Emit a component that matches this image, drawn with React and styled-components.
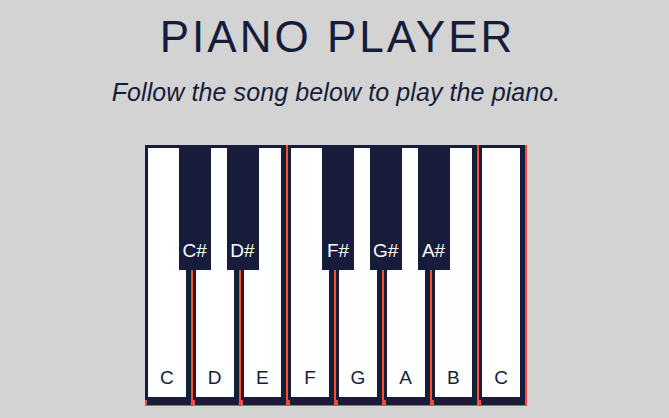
import React from "react";
import styled, { createGlobalStyle } from "styled-components";

const DARK = "#161c3a";
const RED = "#ff4a3b";

const Global = createGlobalStyle`
  html, body { margin: 0; padding: 0; background: #d3d3d3; }
  body { font-family: "Liberation Sans", Arial, sans-serif; }
`;

const Page = styled.main`
  display: flex;
  flex-direction: column;
  align-items: center;
  padding: 15px 0 0 3px;
  min-height: 418px;
  box-sizing: border-box;
`;

const Title = styled.h1`
  margin: 0 0 0 3px;
  font-size: 44px;
  line-height: 44px;
  font-weight: 400;
  letter-spacing: 3px;
  color: ${DARK};
`;

const Subtitle = styled.p`
  margin: 21px 0 0;
  font-size: 25px;
  line-height: 25px;
  letter-spacing: 0.1px;
  font-style: italic;
  color: ${DARK};
`;

const Piano = styled.div`
  position: relative;
  margin-top: 40px;
  width: 382px;
  height: 261px;
  display: flex;
`;

const WhiteKey = styled.div`
  position: relative;
  flex: 1;
  display: flex;
  background: ${DARK};
  padding: 3px 7px 9px 3px;
  box-shadow: inset -2px -1px 0 ${RED};
  &::after {
    content: "";
    position: absolute;
    left: 0;
    bottom: 0;
    width: 2px;
    height: 6px;
    background: ${RED};
  }
`;

const Face = styled.div`
  flex: 1;
  background: #fff;
  display: flex;
  align-items: flex-end;
  justify-content: center;
  padding-bottom: 10px;
`;

const Label = styled.span`
  font-size: 19px;
  line-height: 19px;
  color: ${(p) => (p.$light ? "#fff" : DARK)};
`;

const BlackKey = styled.div`
  position: absolute;
  top: 0;
  width: 32px;
  height: 125px;
  background: ${DARK};
  display: flex;
  align-items: flex-end;
  justify-content: center;
  padding-bottom: 10px;
  box-sizing: border-box;
`;

const whites = ["C", "D", "E", "F", "G", "A", "B", "C"];
const blacks = [
  { name: "C#", at: 1 },
  { name: "D#", at: 2 },
  { name: "F#", at: 4 },
  { name: "G#", at: 5 },
  { name: "A#", at: 6 },
];

export default function App() {
  const step = 382 / 8;
  return (
    <>
      <Global />
      <Page>
        <Title>PIANO PLAYER</Title>
        <Subtitle>Follow the song below to play the piano.</Subtitle>
        <Piano>
          {whites.map((n, i) => (
            <WhiteKey key={i}>
              <Face>
                <Label>{n}</Label>
              </Face>
            </WhiteKey>
          ))}
          {blacks.map((b) => (
            <BlackKey key={b.name} style={{ left: `${b.at * step - 14}px` }}>
              <Label $light>{b.name}</Label>
            </BlackKey>
          ))}
        </Piano>
      </Page>
    </>
  );
}
